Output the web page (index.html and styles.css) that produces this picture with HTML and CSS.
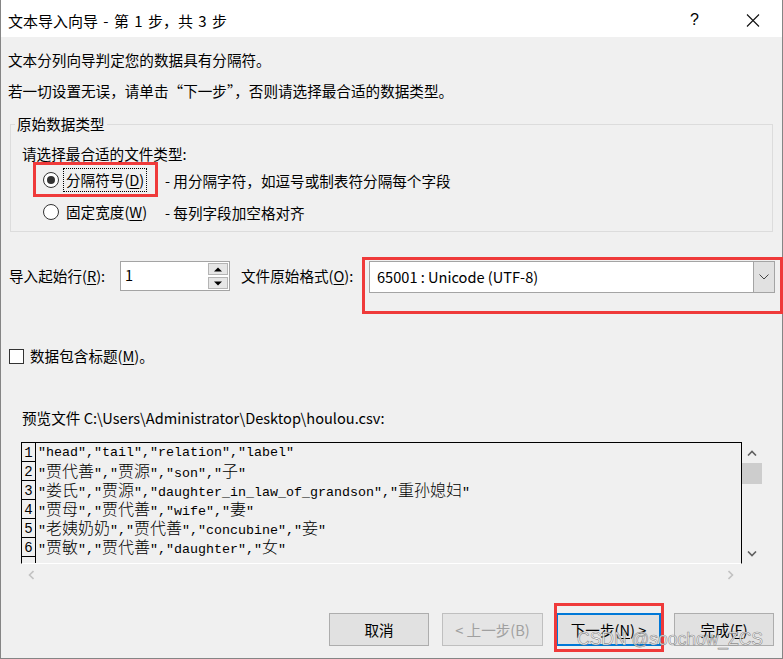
FILE: index.html
```html
<!DOCTYPE html>
<html lang="zh-CN">
<head>
<meta charset="utf-8">
<title>文本导入向导</title>
<link rel="stylesheet" href="styles.css">
</head>
<body>
<div class="window">
  <div class="titlebar">
    <span class="title">文本导入向导 - 第 1 步，共 3 步</span>
    <span class="help">?</span>
    <svg class="close" width="14" height="13" viewBox="0 0 14 13"><path d="M1 0.5L13 12.5M13 0.5L1 12.5" stroke="#111" stroke-width="1.1" fill="none"/></svg>
  </div>

  <p class="line l1">文本分列向导判定您的数据具有分隔符。</p>
  <p class="line l2">若一切设置无误，请单击“下一步”，否则请选择最合适的数据类型。</p>

  <fieldset class="group">
    <legend>原始数据类型</legend>
    <div class="line prompt">请选择最合适的文件类型:</div>
    <div class="radio-row">
      <span class="radio checked"></span>
      <span class="rlabel"><span class="focus">分隔符号(<u>D</u>)</span></span>
      <span class="rdesc">- 用分隔字符，如逗号或制表符分隔每个字段</span>
    </div>
    <div class="radio-row">
      <span class="radio"></span>
      <span class="rlabel"><span class="plain">固定宽度(<u>W</u>)</span></span>
      <span class="rdesc">- 每列字段加空格对齐</span>
    </div>
  </fieldset>

  <div class="row2">
    <span class="lbl lbl-start">导入起始行(<u>R</u>):</span>
    <div class="spin">
      <span class="spin-val">1</span>
      <div class="spin-btns">
        <span class="sbtn"><svg width="8" height="5" viewBox="0 0 8 5"><path d="M0 4.5L4 0.5L8 4.5Z" fill="#000"/></svg></span>
        <span class="sbtn"><svg width="8" height="5" viewBox="0 0 8 5"><path d="M0 0.5L4 4.5L8 0.5Z" fill="#000"/></svg></span>
      </div>
    </div>
    <span class="lbl lbl-fmt">文件原始格式(<u>O</u>):</span>
    <div class="combo">
      <span class="combo-val">65001 : Unicode (UTF-8)</span>
      <span class="combo-btn"><svg width="10" height="6" viewBox="0 0 10 6"><polyline points="0.5,0.5 5,5 9.5,0.5" fill="none" stroke="#444" stroke-width="1"/></svg></span>
    </div>
  </div>

  <div class="check-row">
    <span class="checkbox"></span>
    <span class="check-label">数据包含标题(<u>M</u>)。</span>
  </div>

  <div class="line preview-label">预览文件 C:\Users\Administrator\Desktop\houlou.csv:</div>

  <div class="preview">
    <div class="plist">
      <div class="prow"><span class="num">1</span><span class="ptxt">"head","tail","relation","label"</span></div>
      <div class="prow"><span class="num">2</span><span class="ptxt">"<span class="cj">贾代善</span>","<span class="cj">贾源</span>","son","<span class="cj">子</span>"</span></div>
      <div class="prow"><span class="num">3</span><span class="ptxt">"<span class="cj">娄氏</span>","<span class="cj">贾源</span>","daughter_in_law_of_grandson","<span class="cj">重孙媳妇</span>"</span></div>
      <div class="prow"><span class="num">4</span><span class="ptxt">"<span class="cj">贾母</span>","<span class="cj">贾代善</span>","wife","<span class="cj">妻</span>"</span></div>
      <div class="prow"><span class="num">5</span><span class="ptxt">"<span class="cj">老姨奶奶</span>","<span class="cj">贾代善</span>","concubine","<span class="cj">妾</span>"</span></div>
      <div class="prow"><span class="num">6</span><span class="ptxt">"<span class="cj">贾敏</span>","<span class="cj">贾代善</span>","daughter","<span class="cj">女</span>"</span></div>
      <div class="prow"><span class="num"></span><span class="ptxt"></span></div>
    </div>
    <div class="vscroll">
      <span class="varrow"><svg width="10" height="6" viewBox="0 0 10 6"><polyline points="1,5.5 5,1.5 9,5.5" fill="none" stroke="#606060" stroke-width="1.6"/></svg></span>
      <span class="thumb"></span>
      <span class="vspace"></span>
      <span class="varrow"><svg width="10" height="6" viewBox="0 0 10 6"><polyline points="1,0.5 5,4.5 9,0.5" fill="none" stroke="#606060" stroke-width="1.6"/></svg></span>
    </div>
    <div class="hscroll">
      <svg width="6" height="10" viewBox="0 0 6 10"><polyline points="5.5,1 1.5,5 5.5,9" fill="none" stroke="#c2c2c2" stroke-width="1.6"/></svg>
      <svg width="6" height="10" viewBox="0 0 6 10"><polyline points="0.5,1 4.5,5 0.5,9" fill="none" stroke="#c2c2c2" stroke-width="1.6"/></svg>
    </div>
  </div>

  <div class="btnrow">
    <span class="btn w100">取消</span>
    <span class="btn w101 disabled">&lt; 上一步(B)</span>
    <span class="btn w105 default">下一步(<u>N</u>) &gt;</span>
    <span class="btn w100">完成(<u>F</u>)</span>
  </div>

  <div class="mark mark1"></div>
  <div class="mark mark2"></div>
  <div class="mark mark3"></div>
  <div class="watermark">CSDN @soochow_ZCS</div>
</div>
</body>
</html>
```

FILE: styles.css
```css
* { box-sizing: border-box; }
html, body { margin: 0; padding: 0; overflow: hidden; }
body {
  background: #f0f0f0;
  font-family: "Noto Sans CJK SC", "Noto Sans", sans-serif;
  font-size: 14.6px;
  color: #000;
}
u { text-decoration: underline; text-underline-offset: 2px; }

.window {
  position: relative;
  width: 783px;
  height: 659px;
  background: #f0f0f0;
  border: 1px solid #858585;
  border-top: none;
}

.titlebar {
  height: 37px;
  background: #fff;
  display: flex;
  align-items: center;
  padding: 3px 22px 0 7px;
}
.title { flex: 1; white-space: nowrap; font-size: 15px; word-spacing: 2px; }
.help {
  font-family: "Liberation Sans", sans-serif;
  font-size: 16px;
  margin-right: 47px;
}
.close { display: block; }

.line { margin: 0; height: 20px; line-height: 20px; white-space: nowrap; }
.l1 { margin-top: 13px; padding-left: 7px; }
.l2 { margin-top: 11px; padding-left: 7px; }

.group {
  margin: 13px 9px 0 9px;
  padding: 0 0 3px 0;
  border: 1px solid #dcdcdc;
  min-width: 0;
}
.group legend {
  padding: 0 2px;
  margin-left: 4px;
  height: 20px;
  line-height: 20px;
}
.prompt { margin-top: 10px; padding-left: 11px; }

.radio-row {
  height: 32px;
  display: flex;
  align-items: center;
  padding-left: 32px;
  white-space: nowrap;
}
.radio {
  width: 16px;
  height: 16px;
  border-radius: 50%;
  border: 1px solid #333;
  background: #fff;
  display: flex;
  align-items: center;
  justify-content: center;
  flex: none;
}
.radio.checked::after {
  content: "";
  width: 8px;
  height: 8px;
  border-radius: 50%;
  background: #333;
}
.rlabel { width: 106px; padding-left: 4px; flex: none; }
.focus {
  display: inline-block;
  border: 1px dotted #000;
  padding: 1px 2px;
  line-height: 20px;
}
.plain { display: inline-block; padding: 1px 3px; line-height: 20px; }

.row2 {
  display: flex;
  align-items: flex-start;
  margin-top: 29px;
  padding-left: 8px;
  height: 32px;
}
.lbl { line-height: 30px; white-space: nowrap; }
.lbl-start { width: 111px; }
.lbl-fmt { margin-left: 11px; width: 128px; }

.spin {
  width: 110px;
  height: 30px;
  border: 1px solid #a4a4a4;
  background: #fff;
  display: flex;
}
.spin-val { flex: 1; padding-left: 4px; line-height: 26px; }
.spin-btns {
  width: 21px;
  display: flex;
  flex-direction: column;
  gap: 2px;
  padding: 1px 1px 1px 0;
}
.sbtn {
  flex: 1;
  background: #e6e6e6;
  border: 1px solid #b4b4b4;
  display: flex;
  align-items: center;
  justify-content: center;
}
.sbtn svg { display: block; }

.combo {
  width: 406px;
  height: 32px;
  border: 1px solid #a4a4a4;
  background: #fff;
  display: flex;
}
.combo-val { flex: 1; padding-left: 7px; line-height: 30px; white-space: nowrap; }
.combo-btn {
  width: 21px;
  background: #e1e1e1;
  border-left: 1px solid #a4a4a4;
  display: flex;
  align-items: center;
  justify-content: center;
}
.combo-btn svg { display: block; }

.check-row {
  display: flex;
  align-items: center;
  height: 20px;
  margin-top: 53px;
  padding-left: 8px;
}
.checkbox {
  width: 15px;
  height: 15px;
  border: 1px solid #333;
  background: #fff;
  flex: none;
}
.check-label { margin-left: 6px; line-height: 20px; white-space: nowrap; }

.preview-label { margin-top: 42px; padding-left: 21px; }

.preview {
  margin: 14px 0 0 20px;
  width: 741px;
  display: grid;
  grid-template-columns: 721px 20px;
  grid-template-rows: 122px 22px;
}
.plist {
  border: 1px solid #000;
  border-bottom-color: #fff;
  overflow: hidden;
}
.prow {
  display: flex;
  height: 19px;
  flex: none;
}
.num {
  width: 14px;
  flex: none;
  border-right: 1px solid #000;
  border-bottom: 1px solid #000;
  font-family: "Liberation Mono", monospace;
  font-size: 14px;
  line-height: 21px;
  text-align: center;
  overflow: hidden;
}
.ptxt {
  padding-left: 2px;
  font-family: "Liberation Mono", monospace;
  font-size: 13.33px;
  line-height: 19px;
  white-space: pre;
}
.cj {
  font-family: "Noto Sans CJK SC", sans-serif;
  font-size: 16px;
  font-weight: 300;
  line-height: 16px;
}

.vscroll {
  display: flex;
  flex-direction: column;
}
.varrow {
  height: 21px;
  display: flex;
  align-items: center;
  justify-content: center;
  flex: none;
}
.varrow svg { display: block; }
.thumb { height: 21px; background: #cdcdcd; flex: none; }
.vspace { flex: 1; }

.hscroll {
  display: flex;
  align-items: center;
  justify-content: space-between;
  padding: 0 8px 0 7px;
}
.hscroll svg { display: block; }

.btnrow {
  display: flex;
  justify-content: flex-end;
  gap: 13px;
  margin-top: 27px;
  padding-right: 8px;
}
.btn {
  height: 33px;
  border: 1px solid #adadad;
  background: #e1e1e1;
  display: flex;
  align-items: center;
  justify-content: center;
  white-space: nowrap;
}
.w100 { width: 100px; }
.w101 { width: 101px; }
.w105 { width: 105px; }
.btn.disabled { color: #a0a0a0; border-color: #bfbfbf; background: #e5e5e5; }
.btn.default { border: 2px solid #0078d7; }

.mark {
  position: absolute;
  border: 3px solid #ef3a3a;
}
.mark1 { left: 32px; top: 162px; width: 125px; height: 35px; }
.mark2 { left: 361px; top: 257px; width: 421px; height: 57px; }
.mark3 { left: 553px; top: 603px; width: 110px; height: 49px; }

.watermark {
  position: absolute;
  left: 576px;
  top: 628px;
  font-family: "Liberation Sans", sans-serif;
  font-size: 17.5px;
  line-height: 22px;
  color: rgba(255, 255, 255, 0.85);
  -webkit-text-stroke: 0.6px rgba(110, 110, 110, 0.8);
  white-space: nowrap;
}
```
